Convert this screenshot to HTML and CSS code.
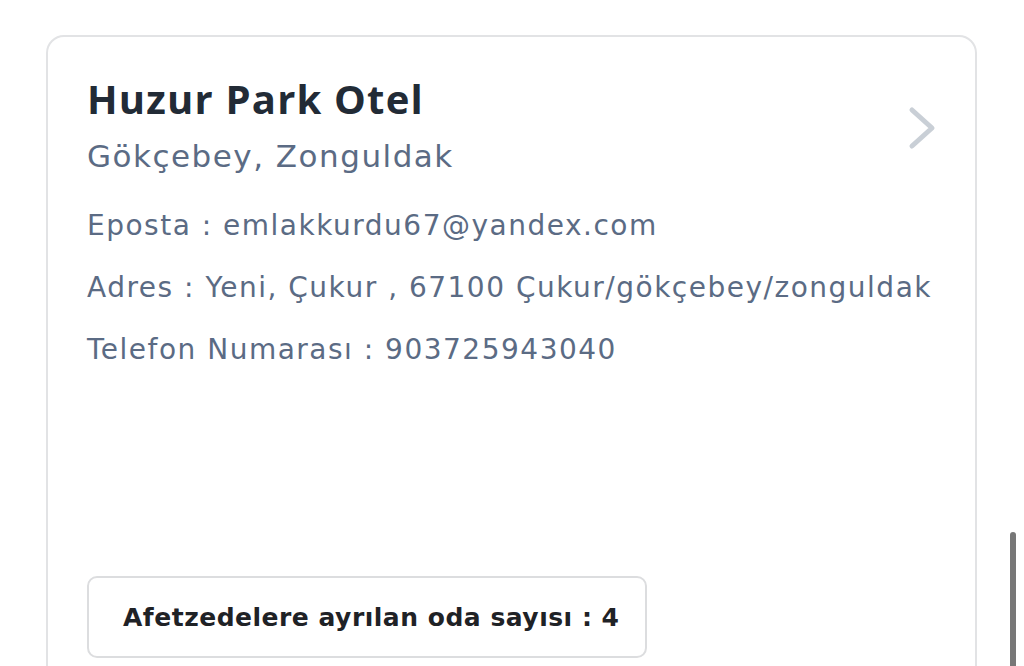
FILE: index.html
```html
<!DOCTYPE html>
<html lang="tr">
<head>
<meta charset="utf-8">
<link rel="stylesheet" href="styles.css">
</head>
<body>
<div class="page">
  <div class="card">
    <div class="head">
      <div class="titles">
        <h1 class="title">Huzur Park Otel</h1>
        <div class="subtitle">Gökçebey, Zonguldak</div>
      </div>
      <svg class="chevron" width="30" height="46" viewBox="0 0 30 46"><path d="M5 5 L25 23 L5 41" fill="none" stroke="#c9cfd6" stroke-width="5" stroke-linecap="round" stroke-linejoin="round"/></svg>
    </div>
    <div class="info">
      <div class="line">Eposta : emlakkurdu67@yandex.com</div>
      <div class="line">Adres : Yeni, Çukur , 67100 Çukur/gökçebey/zonguldak</div>
      <div class="line">Telefon Numarası : 903725943040</div>
    </div>
    <div class="rooms">Afetzedelere ayrılan oda sayısı : 4</div>
  </div>
  <div class="scrollbar"></div>
</div>
</body>
</html>
```
FILE: styles.css
```css
html, body {
  margin: 0;
  padding: 0;
  background: #ffffff;
  overflow: hidden;
}
.page {
  position: relative;
  width: 1024px;
  height: 666px;
  padding: 35px 0 0 46px;
  box-sizing: border-box;
  font-family: "DejaVu Sans", "Open Sans", sans-serif;
}
.card {
  width: 931px;
  height: 720px;
  box-sizing: border-box;
  border: 2px solid #e2e3e5;
  border-radius: 18px;
  padding: 37px 38px 0 39px;
  display: flex;
  flex-direction: column;
}
.head {
  display: flex;
  justify-content: space-between;
  align-items: flex-start;
}
.title {
  margin: 0;
  font-family: "Open Sans", sans-serif;
  font-size: 40px;
  line-height: 50px;
  font-weight: 700;
  color: #222b36;
  letter-spacing: 1.2px;
}
.subtitle {
  margin-top: 12px;
  font-size: 31px;
  line-height: 40px;
  color: #5b6b84;
  letter-spacing: 1.5px;
}
.chevron {
  margin-top: 31px;
}
.info {
  margin-top: 30px;
  display: flex;
  flex-direction: column;
  gap: 22px;
}
.line {
  font-size: 28px;
  line-height: 40px;
  color: #5b6b84;
  letter-spacing: 1.5px;
}
.rooms {
  margin-top: 206px;
  width: 560px;
  height: 82px;
  box-sizing: border-box;
  border: 2px solid #dcdddf;
  border-radius: 10px;
  padding-left: 34px;
  display: flex;
  align-items: center;
  font-size: 25px;
  font-weight: 700;
  color: #1f2226;
  letter-spacing: 0.5px;
}
.scrollbar {
  position: absolute;
  left: 1010px;
  top: 532px;
  width: 6px;
  height: 140px;
  background: #777777;
  border-radius: 3px;
}
```
